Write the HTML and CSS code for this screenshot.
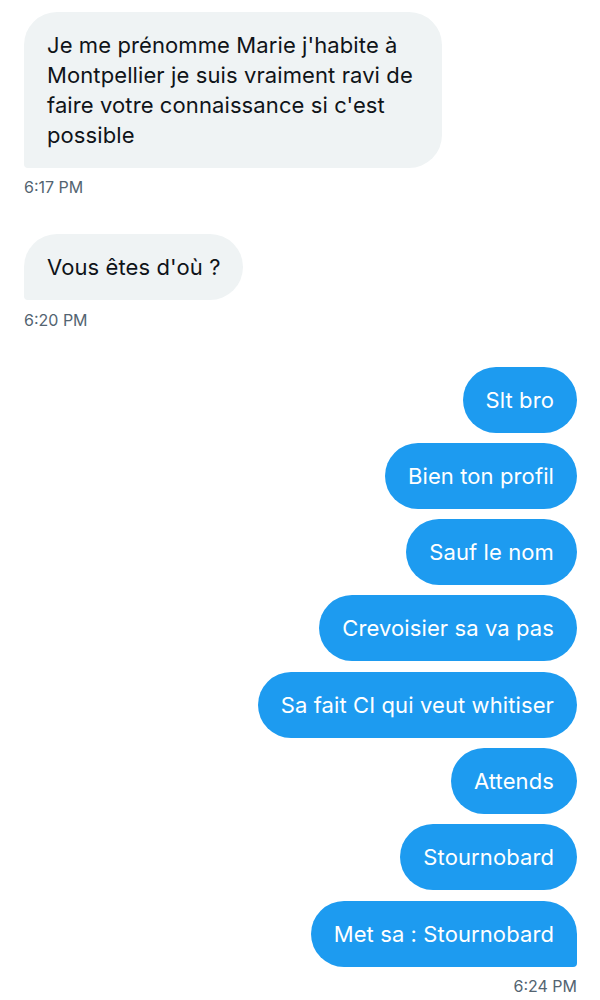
FILE: index.html
```html
<!DOCTYPE html>
<html lang="fr">
<head>
<meta charset="utf-8">
<link rel="stylesheet" href="styles.css">
</head>
<body>
<div class="chat">
  <div class="group in">
    <div class="bubble in-last">Je me prénomme Marie j'habite à Montpellier je suis vraiment ravi de faire votre connaissance si c'est possible</div>
    <div class="time">6:17 PM</div>
  </div>
  <div class="group in">
    <div class="bubble in-last">Vous êtes d'où ?</div>
    <div class="time">6:20 PM</div>
  </div>
  <div class="group out">
    <div class="bubble">Slt bro</div>
    <div class="bubble">Bien ton profil</div>
    <div class="bubble">Sauf le nom</div>
    <div class="bubble">Crevoisier sa va pas</div>
    <div class="bubble">Sa fait CI qui veut whitiser</div>
    <div class="bubble">Attends</div>
    <div class="bubble">Stournobard</div>
    <div class="bubble out-last">Met sa : Stournobard</div>
    <div class="time">6:24 PM</div>
  </div>
</div>
</body>
</html>
```
FILE: styles.css
```css
html, body {
  margin: 0;
  padding: 0;
  background: #ffffff;
}
body {
  font-family: Inter, "Noto Sans", sans-serif;
  color: #0f1419;
}
.chat {
  display: flex;
  flex-direction: column;
  gap: 37px;
  padding: 12px 23px 0 24px;
}
.group {
  display: flex;
  flex-direction: column;
  gap: 10.3px;
}
.group.in { align-items: flex-start; }
.group.out { align-items: flex-end; }
.bubble {
  font-size: 22px;
  line-height: 30px;
  letter-spacing: 0.1px;
  padding: 18px 23px;
  border-radius: 33px;
  max-width: 372px;
}
.in .bubble {
  background: #eff3f4;
  color: #0f1419;
}
.out .bubble {
  background: #1d9bf0;
  color: #ffffff;
}
.bubble.in-last { border-bottom-left-radius: 4px; }
.bubble.out-last { border-bottom-right-radius: 4px; }
.time {
  font-size: 16px;
  line-height: 20px;
  color: #536471;
  margin-top: -1px;
}
```
